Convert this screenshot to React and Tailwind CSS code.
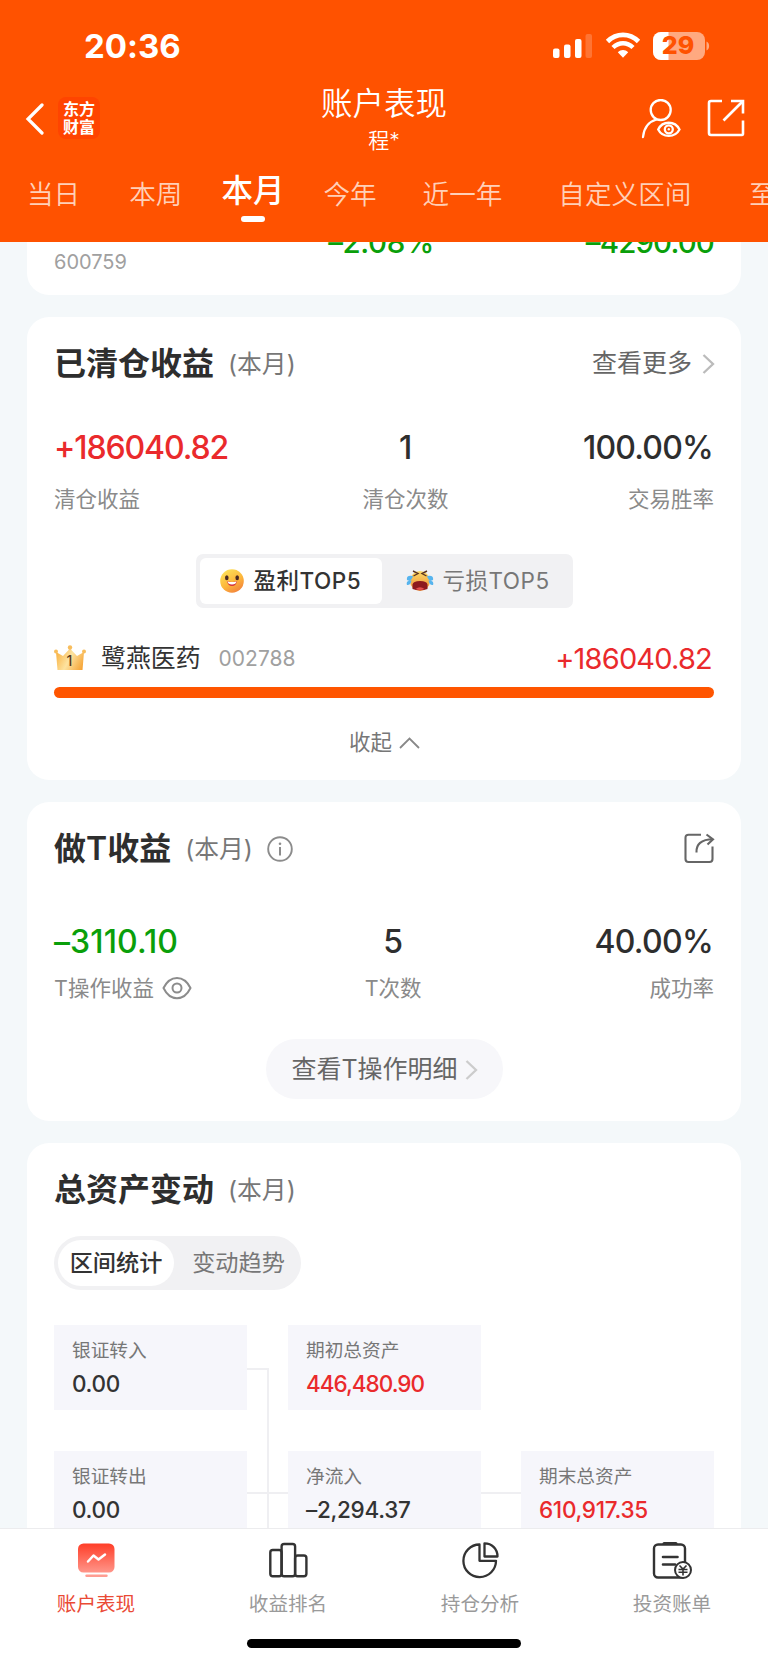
import { useState } from "react";

const tabs = [
  { label: "当日", className: "ml-[27px]" },
  { label: "本周", className: "ml-[49px]" },
  { label: "本月", className: "ml-[39px]" },
  { label: "今年", className: "ml-[39px]" },
  { label: "近一年", className: "ml-[46px]" },
  { label: "自定义区间", className: "ml-[56px]" },
  { label: "至今", className: "ml-[58px]" },
];

function StatusIcons() {
  return (
    <svg width="158" height="30" viewBox="0 0 158 30" fill="none">
      <rect x="1" y="17.5" width="6.5" height="9.5" rx="2" fill="#fff" />
      <rect x="12" y="13.5" width="6.5" height="13.5" rx="2" fill="#fff" />
      <rect x="23" y="8" width="6.5" height="19" rx="2" fill="#fff" />
      <rect x="33.5" y="3" width="6.5" height="24" rx="2" fill="#fff" fillOpacity="0.2" />
      <path d="M55.5 10.5C64.5 1.7 77.5 1.7 86.5 10.5" stroke="#fff" strokeWidth="4.8" />
      <path d="M61 16.5C67 10.7 75 10.7 81 16.5" stroke="#fff" strokeWidth="4.5" />
      <path d="M65.8 21.2C69 18.3 73 18.3 76.2 21.2L71 26.7Z" fill="#fff" />
      <rect x="101" y="1" width="52" height="28" rx="8" fill="#fff" fillOpacity="0.5" />
      <path d="M109 1H116.5V29H109A8 8 0 0 1 101 21V9A8 8 0 0 1 109 1Z" fill="#fff" />
      <path d="M154.5 10.5C158 12 158 18 154.5 19.5Z" fill="#fff" fillOpacity="0.5" />
      <text x="126" y="23.3" textAnchor="middle" fontSize="25" fontWeight="800" fill="#ff5200" fontFamily="Inter">
        29
      </text>
    </svg>
  );
}

function UserEyeIcon() {
  return (
    <svg width="40" height="40" viewBox="0 0 40 40" fill="none" stroke="#fff" strokeWidth="2.3">
      <circle cx="19.7" cy="11" r="10" />
      <path d="M2 38C3 28 8.5 22.5 15.5 20.5" strokeLinecap="round" />
      <path d="M17.2 30.5C21.5 21.5 34 21.5 38.5 30.5C34 39 21.5 39 17.2 30.5Z" />
      <circle cx="27.8" cy="30.3" r="4" />
      <circle cx="27.8" cy="30.3" r="1.2" fill="#fff" stroke="none" />
    </svg>
  );
}

function OpenIcon() {
  return (
    <svg width="38" height="38" viewBox="0 0 38 38" fill="none" stroke="#fff" strokeWidth="2.6">
      <path d="M15 2H4Q2 2 2 4V34Q2 36 4 36H35Q36 36 36 34.5V21.5" />
      <path d="M24 2H36V14.5" />
      <path d="M36 2L16.5 21.5" />
    </svg>
  );
}

function ShareIcon() {
  return (
    <svg width="31" height="31" viewBox="0 0 31 31" fill="none" stroke="#666" strokeWidth="2.1">
      <path d="M17 1.8H4.5Q1.5 1.8 1.5 4.8V26Q1.5 29 4.5 29H25.5Q28.5 29 28.5 26V13.5" />
      <path d="M12.5 19.5C12 11.5 17 6.3 29 6.3" />
      <path d="M22.5 1.5L29 6.3L23.5 11.5" />
    </svg>
  );
}

function Chevron({ className }) {
  return (
    <svg width="13" height="22" viewBox="0 0 13 22" fill="none" className={className}>
      <path d="M1.5 2L11 11L1.5 20" stroke="currentColor" strokeWidth="2.3" />
    </svg>
  );
}

function SmileEmoji() {
  return (
    <svg width="24" height="24" viewBox="0 0 24 24" fill="none">
      <defs>
        <linearGradient id="smile" x1="6" y1="1" x2="19" y2="23" gradientUnits="userSpaceOnUse">
          <stop stopColor="#fddf58" />
          <stop offset="0.55" stopColor="#fdb63b" />
          <stop offset="1" stopColor="#f2803c" />
        </linearGradient>
      </defs>
      <circle cx="12" cy="12" r="11.8" fill="url(#smile)" />
      <ellipse cx="6.8" cy="8.8" rx="1.8" ry="2.5" fill="#4b2a22" />
      <ellipse cx="17.2" cy="8.8" rx="1.8" ry="2.5" fill="#4b2a22" />
      <path d="M7 12.3Q12 13.5 17 12.3Q16.2 17 12 17Q7.8 17 7 12.3Z" fill="#d6333a" />
      <path d="M7.5 12.5Q12 13.6 16.5 12.5Q16 15.5 12 15.5Q8 15.5 7.5 12.5Z" fill="#fff" />
    </svg>
  );
}

function CryEmoji() {
  return (
    <svg width="28" height="24" viewBox="0 0 28 24" fill="none">
      <defs>
        <linearGradient id="cry" x1="14" y1="1" x2="14" y2="22" gradientUnits="userSpaceOnUse">
          <stop stopColor="#fde06a" />
          <stop offset="1" stopColor="#f08c35" />
        </linearGradient>
      </defs>
      <circle cx="14" cy="12" r="10" fill="url(#cry)" />
      <path d="M7 2L12 4.5L7.5 7M21 2L16 4.5L20.5 7" stroke="#5c3522" strokeWidth="1.4" />
      <path d="M6.5 20V15.5Q7 12 14 12Q21 12 21.5 15.5V20Q14 22.5 6.5 20Z" fill="#8d1a1e" />
      <path d="M9.5 20Q14 16.5 18.5 20Q14 22 9.5 20Z" fill="#e5504c" />
      <path d="M7 7Q0 5.5 1 11Q5 13.5 7 7ZM5.5 11.5Q-0.5 11.5 1 16Q4.5 16.5 5.5 11.5Z" fill="#56b4ee" />
      <path d="M21 7Q28 5.5 27 11Q23 13.5 21 7ZM22.5 11.5Q28.5 11.5 27 16Q23.5 16.5 22.5 11.5Z" fill="#56b4ee" />
    </svg>
  );
}

function CrownIcon() {
  return (
    <svg width="32" height="26" viewBox="0 0 32 26" fill="none">
      <defs>
        <linearGradient id="crown" x1="3" y1="8" x2="30" y2="22" gradientUnits="userSpaceOnUse">
          <stop stopColor="#f9b548" />
          <stop offset="0.45" stopColor="#fde3a0" />
          <stop offset="1" stopColor="#f6a02f" />
        </linearGradient>
      </defs>
      <path d="M2 7L9 11L16 3.5L23 11L30 7L28.5 25H3.5Z" fill="url(#crown)" />
      <circle cx="16" cy="2.5" r="2.2" fill="#f8bd5c" />
      <circle cx="2" cy="6.5" r="2" fill="#f8bd5c" />
      <circle cx="30" cy="6.5" r="2" fill="#f8bd5c" />
      <text x="15.5" y="20.8" textAnchor="middle" fontSize="14" fontWeight="500" fill="#5a3a1c" fontFamily="Inter">
        1
      </text>
    </svg>
  );
}

function EyeIcon() {
  return (
    <svg width="30" height="24" viewBox="0 0 30 24" fill="none" stroke="#8c8c8c" strokeWidth="2">
      <path d="M1.5 12C8 -1.5 22 -1.5 28.5 12C22 25.5 8 25.5 1.5 12Z" strokeLinejoin="round" />
      <circle cx="15" cy="12" r="4.5" />
    </svg>
  );
}

function InfoIcon() {
  return (
    <svg width="26" height="26" viewBox="0 0 26 26" fill="none" stroke="#8c8c8c" strokeWidth="1.9">
      <circle cx="13" cy="13" r="11.8" />
      <path d="M13 11V19.5" strokeWidth="2" />
      <circle cx="13" cy="7.8" r="1.3" fill="#8c8c8c" stroke="none" />
    </svg>
  );
}

function PerformanceIcon() {
  return (
    <svg width="40" height="40" viewBox="0 0 40 40" fill="none">
      <defs>
        <linearGradient id="perf" x1="20" y1="3" x2="20" y2="32" gradientUnits="userSpaceOnUse">
          <stop stopColor="#ff3c26" />
          <stop offset="1" stopColor="#ff9488" />
        </linearGradient>
      </defs>
      <rect x="2" y="3.5" width="36.5" height="29" rx="5.5" fill="url(#perf)" />
      <path d="M12 21.5L17.5 15.5L22.5 19.5L29 14.5" stroke="#fff" strokeWidth="2.5" strokeLinecap="round" strokeLinejoin="round" />
      <path d="M10.5 35.7H30.5" stroke="#ff9d92" strokeWidth="2.4" strokeLinecap="round" />
    </svg>
  );
}

function RankIcon() {
  return (
    <svg width="40" height="40" viewBox="0 0 40 40" fill="none" stroke="#333" strokeWidth="2.4">
      <rect x="2.3" y="10" width="11.3" height="26.3" rx="2.5" />
      <rect x="13.6" y="4" width="13.5" height="32.3" rx="2.5" />
      <rect x="27.1" y="15.5" width="11.3" height="20.8" rx="2.5" />
    </svg>
  );
}

function PieIcon() {
  return (
    <svg width="40" height="40" viewBox="0 0 40 40" fill="none" stroke="#333" strokeWidth="2.3">
      <path d="M19.5 4.5A16.3 16.3 0 1 0 36 20.8H19.5Z" strokeLinejoin="round" />
      <path d="M24.5 3.3V16.5H37.5C37.5 9 32 3.3 24.5 3.3Z" strokeLinejoin="round" />
    </svg>
  );
}

function BillIcon() {
  return (
    <svg width="40" height="40" viewBox="0 0 40 40" fill="none" stroke="#333" strokeWidth="2.4">
      <rect x="2" y="4.5" width="31" height="33" rx="4" />
      <path d="M12 3.5H24" strokeWidth="3" strokeLinecap="round" />
      <path d="M11 17H25.5M11 24.5H23" strokeWidth="2.6" strokeLinecap="round" />
      <circle cx="31" cy="30" r="8" fill="#fff" strokeWidth="2" />
      <path d="M27.5 25.5L31 29L34.5 25.5M26.5 29.5H35.5M26.5 32.2H35.5M31 29V35.5" strokeWidth="1.6" />
    </svg>
  );
}

const navItems = [
  { label: "账户表现", icon: PerformanceIcon },
  { label: "收益排名", icon: RankIcon },
  { label: "持仓分析", icon: PieIcon },
  { label: "投资账单", icon: BillIcon },
];

function CardTitle({ title, children }) {
  return (
    <div className="flex h-[44px] items-center">
      <h2 className="pt-px text-[32px] font-semibold leading-none text-[#2e2e2e]">{title}</h2>
      <span className="ml-[14px] flex items-center pt-[2px] text-[24.8px] leading-none text-[#777]">(本月)</span>
      {children}
    </div>
  );
}

function AssetBox({ label, value, className = "tracking-[-0.3px] text-[#333]" }) {
  return (
    <div className="flex flex-col bg-[#f6f6fb] pl-[18px]">
      <div className="mt-[14px] h-6 text-[18.7px] leading-6 text-[#777]">{label}</div>
      <div className={`mt-[7px] h-7 text-[22.5px] font-[530] leading-7 ${className}`}>{value}</div>
    </div>
  );
}

export default function App() {
  const [activeTab, setActiveTab] = useState("本月");
  const [top, setTop] = useState("profit");
  const [view, setView] = useState("stats");
  const [page, setPage] = useState("账户表现");

  return (
    <div className="flex h-[1663px] w-[768px] flex-col overflow-hidden bg-[#f4f8fa] font-['Inter','Noto_Sans_CJK_SC',sans-serif] [font-feature-settings:'calt'_0]">
      <header className="h-[242px] shrink-0 overflow-hidden bg-[#ff5200] text-white">
        <div className="flex h-[92px] items-center justify-between pl-[84px] pr-[58px]">
          <span className="pt-px text-[33px] font-bold leading-none">20:36</span>
          <StatusIcons />
        </div>

        <div className="grid h-[68px] grid-cols-[1fr_auto_1fr] px-[22px]">
          <div className="flex items-start pl-[3px]">
            <svg width="19" height="34" viewBox="0 0 19 34" fill="none" className="mt-[10px]">
              <path d="M17 3L3 17L17 31" stroke="#fff" strokeWidth="3.2" strokeLinecap="round" />
            </svg>
            <div className="ml-[14px] mt-[5px] flex h-[42px] w-[42px] flex-col items-center justify-center rounded-lg bg-[#ff4400] text-[16px] font-bold leading-[18px]">
              <span>东方</span>
              <span>财富</span>
            </div>
          </div>
          <div className="flex flex-col items-center">
            <h1 className="mt-[-5px] text-[31.5px] font-[350] leading-[34px]">账户表现</h1>
            <span className="mt-[8px] text-[21px] font-[350] leading-6">程*</span>
          </div>
          <div className="flex items-start justify-end pr-px">
            <button className="mt-[7px]">
              <UserEyeIcon />
            </button>
            <button className="ml-[26px] mt-[7px]">
              <OpenIcon />
            </button>
          </div>
        </div>

        <div className="flex h-[82px] w-[880px] items-start">
          {tabs.map((tab) => (
            <button key={tab.label} onClick={() => setActiveTab(tab.label)} className={`flex shrink-0 flex-col items-center ${tab.className}`}>
              {tab.label === activeTab ? (
                <>
                  <span className="mt-[11px] text-[31.5px] font-[550] leading-10">{tab.label}</span>
                  <span className="mt-[5px] h-[6px] w-6 rounded-full bg-white" />
                </>
              ) : (
                <span className="mt-[14px] text-[26.6px] font-[350] leading-10 text-[#ffd0b8]">{tab.label}</span>
              )}
            </button>
          ))}
        </div>
      </header>

      <main className="min-h-0 flex-1 overflow-hidden px-[27px]">
        <section className="mt-[-30px] flex h-[83px] items-start rounded-[22px] bg-white px-[27px]">
          <span className="mt-[38px] text-[20px] leading-6 text-[#a0a0a0]">600759</span>
          <span className="ml-auto mt-[12px] text-[29.5px] font-medium leading-[36px] tracking-[-0.4px] text-[#0a9f0a]">–2.08%</span>
          <span className="ml-[152px] mt-[12px] text-[29.5px] font-medium leading-[36px] tracking-[-0.9px] text-[#0a9f0a]">–4290.00</span>
        </section>

        <section className="mt-[22px] h-[463px] rounded-[22px] bg-white px-[27px] pt-[24px]">
          <div className="flex items-center justify-between">
            <CardTitle title="已清仓收益" />
            <button className="-mr-[2px] flex items-center pt-px text-[25px] leading-none text-[#666]">
              查看更多
              <Chevron className="ml-[10px] mr-px text-[#bbb]" />
            </button>
          </div>

          <div className="mt-[43px] flex justify-between">
            <div className="flex flex-col">
              <span className="text-[32px] font-[530] leading-10 tracking-[-1.1px] text-[#ea2a2c]">+186040.82</span>
              <span className="mt-[15px] text-[21.5px] leading-8 text-[#8a8a8a]">清仓收益</span>
            </div>
            <div className="flex flex-col items-center">
              <span className="text-[32px] font-[530] leading-10 text-[#2e2e2e]">1</span>
              <span className="mt-[15px] text-[21.5px] leading-8 text-[#8a8a8a]">清仓次数</span>
            </div>
            <div className="flex flex-col items-end">
              <span className="pr-px text-[32px] font-[530] leading-10 tracking-[-0.8px] text-[#2e2e2e]">100.00%</span>
              <span className="mt-[15px] text-[21.5px] leading-8 text-[#8a8a8a]">交易胜率</span>
            </div>
          </div>

          <div className="mx-auto mt-[39px] flex h-[54px] w-[377px] rounded-[7px] bg-[#f1f1f3] p-1">
            <button
              onClick={() => setTop("profit")}
              className={`flex w-[182px] items-center pl-5 text-[22.5px] leading-none tracking-[0.5px] ${top === "profit" ? "rounded-[6px] bg-white font-medium text-[#333]" : "text-[#777]"}`}
            >
              <SmileEmoji />
              <span className="ml-[10px]">盈利TOP5</span>
            </button>
            <button
              onClick={() => setTop("loss")}
              className={`flex flex-1 items-center pl-[24px] text-[22.5px] leading-none tracking-[0.5px] ${top === "loss" ? "rounded-[6px] bg-white font-medium text-[#333]" : "text-[#777]"}`}
            >
              <CryEmoji />
              <span className="ml-[9px]">亏损TOP5</span>
            </button>
          </div>

          <div className="mt-[30px] flex h-10 items-center">
            <CrownIcon />
            <span className="ml-[15px] text-[24.9px] leading-none text-[#333]">鹭燕医药</span>
            <span className="ml-[18px] text-[21px] leading-none text-[#a0a0a0]">002788</span>
            <span className="ml-auto pr-[2px] text-[29px] leading-none tracking-[-0.8px] text-[#ea2a2c]">+186040.82</span>
          </div>
          <div className="mt-[9px] h-[11px] rounded-full bg-[#ff5500]" />

          <button className="mx-auto mt-[29px] flex h-8 items-center pl-px text-[21.5px] leading-none text-[#777]">
            收起
            <svg width="21" height="12" viewBox="0 0 21 12" fill="none" className="ml-[7px]">
              <path d="M1 11L10.5 1.5L20 11" stroke="#888" strokeWidth="1.8" />
            </svg>
          </button>
        </section>

        <section className="mt-[22px] h-[319px] rounded-[22px] bg-white px-[27px] pt-[24px]">
          <div className="flex items-center justify-between">
            <CardTitle title="做T收益">
              <button className="ml-[14px] mt-px">
                <InfoIcon />
              </button>
            </CardTitle>
            <button className="-mr-[1px]">
              <ShareIcon />
            </button>
          </div>

          <div className="mt-[52px] flex justify-between">
            <div className="flex flex-col">
              <span className="text-[32px] font-[530] leading-10 tracking-[0.1px] text-[#0a9f0a]">–3110.10</span>
              <span className="mt-[10px] flex items-center text-[21.5px] leading-8 text-[#8a8a8a]">
                <span className="mr-[8px]">T操作收益</span>
                <EyeIcon />
              </span>
            </div>
            <div className="flex flex-col items-center">
              <span className="text-[32px] font-[530] leading-10 text-[#2e2e2e]">5</span>
              <span className="mt-[10px] text-[21.5px] leading-8 text-[#8a8a8a]">T次数</span>
            </div>
            <div className="flex flex-col items-end">
              <span className="pr-px text-[32px] font-[530] leading-10 tracking-[-0.7px] text-[#2e2e2e]">40.00%</span>
              <span className="mt-[10px] text-[21.5px] leading-8 text-[#8a8a8a]">成功率</span>
            </div>
          </div>

          <button className="mx-auto mt-[35px] flex h-[60px] w-[237px] items-center justify-center rounded-full bg-[#f7f7fa] pl-px pt-px text-[25px] leading-none text-[#666]">
            查看T操作明细
            <Chevron className="ml-[7px] text-[#ccc]" />
          </button>
        </section>

        <section className="mt-[22px] h-[480px] rounded-[22px] bg-white px-[27px] pt-[24px]">
          <CardTitle title="总资产变动" />

          <div className="mt-[25px] flex h-[54px] w-[247px] rounded-full bg-[#f1f1f3] p-1 text-[23.2px] leading-none">
            <button
              onClick={() => setView("stats")}
              className={`w-[116px] rounded-full pt-[2px] ${view === "stats" ? "bg-white font-medium text-[#333]" : "text-[#777]"}`}
            >
              区间统计
            </button>
            <button
              onClick={() => setView("trend")}
              className={`flex-1 rounded-full pl-[6px] pt-[2px] ${view === "trend" ? "bg-white font-medium text-[#333]" : "text-[#777]"}`}
            >
              变动趋势
            </button>
          </div>

          <div className="mt-[35px] grid grid-cols-[193px_41px_193px_40px_193px] grid-rows-[85px_85px] gap-y-[41px]">
            <AssetBox label="银证转入" value="0.00" />
            {/* bracket joining the left column to the net inflow box */}
            <div className="row-span-2 flex flex-col pt-[43px]">
              <div className="h-[124px] w-[22px] border-r-2 border-t-2 border-[#efeff2]" />
              <div className="flex-1 border-t-2 border-[#efeff2]">
                <div className="h-full w-[22px] border-r-2 border-[#efeff2]" />
              </div>
            </div>
            <AssetBox label="期初总资产" value="446,480.90" className="tracking-[-1px] text-[#ea2a2c]" />
            <div className="col-span-2" />
            <AssetBox label="银证转出" value="0.00" />
            <AssetBox label="净流入" value="–2,294.37" />
            <div className="mt-[41px] h-[2px] bg-[#efeff2]" />
            <AssetBox label="期末总资产" value="610,917.35" className="tracking-[-0.3px] text-[#ea2a2c]" />
          </div>
        </section>
      </main>

      <nav className="h-[135px] shrink-0 border-t border-[#ececee] bg-white">
        <div className="grid grid-cols-4">
          {navItems.map(({ label, icon: Icon }) => (
            <button key={label} onClick={() => setPage(label)} className="flex flex-col items-center pt-[11px]">
              <Icon />
              <span className={`mt-[9px] text-[19.6px] leading-[30px] ${label === page ? "text-[#ea4a35]" : "text-[#9a9a9a]"}`}>{label}</span>
            </button>
          ))}
        </div>
        <div className="mx-auto mt-[20px] h-[9px] w-[274px] rounded-full bg-black" />
      </nav>
    </div>
  );
}
